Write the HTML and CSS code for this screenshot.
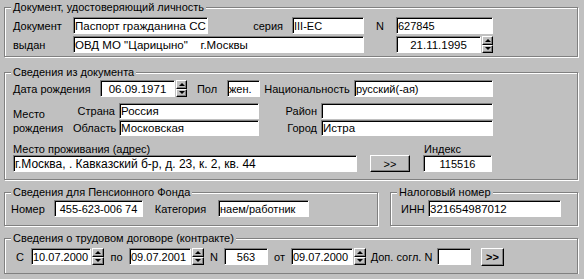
FILE: index.html
```html
<!DOCTYPE html>
<html lang="ru">
<head>
    <meta charset="UTF-8">
    <title>Карточка сотрудника</title>
    <link rel="stylesheet" href="styles.css">
</head>
<body>
    <div class="form">
        <!-- Документ -->
        <div class="group g-doc">
            <span class="group-title">Документ, удостоверяющий личность</span>
            <div class="row">
                <span class="lbl lbl-doc">Документ</span>
                <input class="edit doc-type" value="Паспорт гражданина СССР">
                <span class="lbl lbl-series">серия</span>
                <input class="edit doc-series" value="III-ЕС">
                <span class="lbl lbl-n">N</span>
                <input class="edit doc-number" value="627845">
            </div>
            <div class="row">
                <span class="lbl lbl-doc">выдан</span>
                <input class="edit doc-issuer" value="ОВД МО &quot;Царицыно&quot;    г.Москвы">
                <span class="lbl lbl-n"></span>
                <div class="date date-issued">
                    <input class="edit center" value="21.11.1995">
                    <span class="spin"><span class="spin-up"></span><span class="spin-down"></span></span>
                </div>
            </div>
        </div>

        <!-- Сведения из документа -->
        <div class="group g-birth">
            <span class="group-title">Сведения из документа</span>
            <div class="row">
                <span class="lbl lbl-bdate">Дата рождения</span>
                <div class="date date-birth">
                    <input class="edit center" value="06.09.1971">
                    <span class="spin"><span class="spin-up"></span><span class="spin-down"></span></span>
                </div>
                <span class="lbl lbl-sex">Пол</span>
                <input class="edit sex" value="жен.">
                <span class="lbl lbl-nat">Национальность</span>
                <input class="edit nat" value="русский(-ая)">
            </div>
            <div class="birthplace">
                <span class="bp-title">Место<br>рождения</span>
                <span class="lbl bp-lbl">Страна</span>
                <input class="edit short" value="Россия">
                <span class="lbl bp-lbl">Район</span>
                <input class="edit short" value="">
                <span class="lbl bp-lbl">Область</span>
                <input class="edit short" value="Московская">
                <span class="lbl bp-lbl">Город</span>
                <input class="edit short" value="Истра">
            </div>
            <div class="address">
                <span class="cap">Место проживания (адрес)</span>
                <span class="cap cap-index">Индекс</span>
                <input class="edit addr" value="г.Москва, . Кавказский б-р, д. 23, к. 2, кв. 44">
                <button class="btn">&gt;&gt;</button>
                <input class="edit center" value="115516">
            </div>
        </div>

        <div class="pair">
            <!-- Пенсионный фонд -->
            <div class="group g-pension">
                <span class="group-title">Сведения для Пенсионного Фонда</span>
                <div class="row">
                    <span class="lbl lbl-num">Номер</span>
                    <input class="edit pfr-num center" value="455-623-006 74">
                    <span class="lbl lbl-cat">Категория</span>
                    <input class="edit pfr-cat" value="наем/работник">
                </div>
            </div>
            <!-- ИНН -->
            <div class="group g-tax">
                <span class="group-title">Налоговый номер</span>
                <div class="row">
                    <span class="lbl lbl-inn">ИНН</span>
                    <input class="edit inn" value="321654987012">
                </div>
            </div>
        </div>

        <!-- Трудовой договор -->
        <div class="group g-contract">
            <span class="group-title">Сведения о трудовом договоре (контракте)</span>
            <div class="row">
                <span class="lbl lbl-from">С</span>
                <input class="edit c-date1" value="10.07.2000">
                <span class="spin spin-out"><span class="spin-up"></span><span class="spin-down"></span></span>
                <span class="lbl lbl-to">по</span>
                <input class="edit c-date2" value="09.07.2001">
                <span class="spin spin-out"><span class="spin-up"></span><span class="spin-down"></span></span>
                <span class="lbl lbl-cn">N</span>
                <input class="edit c-num center" value="563">
                <span class="lbl lbl-ot">от</span>
                <input class="edit c-date3" value="09.07.2000">
                <span class="spin spin-out"><span class="spin-up"></span><span class="spin-down"></span></span>
                <span class="lbl lbl-add">Доп. согл. N</span>
                <input class="edit c-add" value="">
                <button class="btn btn-bold">&gt;&gt;</button>
            </div>
        </div>
    </div>
</body>
</html>
```

FILE: styles.css
```css
body {
    margin: 0;
    background: #c0c0c0;
    font-family: "Liberation Sans", Arial, sans-serif;
    font-size: 11px;
    color: #000;
}
.form {
    display: flex;
    flex-direction: column;
    padding: 7px 6px 0 4px;
}

/* group boxes */
.group {
    position: relative;
    border: 1px solid #808080;
    box-shadow: inset 1px 1px #fff, 1px 1px #fff;
    padding: 0 8px;
}
.group-title {
    position: absolute;
    top: -8px;
    left: 6px;
    padding: 0 2px;
    line-height: 14px;
    background: #c0c0c0;
    white-space: nowrap;
}
.g-doc {
    padding-top: 9px;
    padding-bottom: 3px;
    display: flex;
    flex-direction: column;
    gap: 2px;
}
.g-birth {
    margin-top: 15px;
    padding-top: 7px;
    padding-bottom: 7px;
}
.pair {
    display: flex;
    gap: 12px;
    margin-top: 12px;
}
.g-pension {
    width: 374px;
    box-sizing: border-box;
    padding: 7px 6px 8px;
}
.g-tax {
    flex: 1;
    padding: 7px 10px 8px;
}
.g-contract {
    margin-top: 12px;
    padding-top: 9px;
    padding-bottom: 8px;
}

/* rows and labels */
.row {
    display: flex;
    align-items: center;
    height: 17px;
}
.lbl {
    flex: none;
    white-space: nowrap;
}
.lbl-doc { width: 60px; }
.lbl-series { width: 84px; text-align: right; padding-right: 9px; box-sizing: border-box; }
.lbl-n { width: 32px; text-align: center; }
.lbl-bdate { width: 87px; }
.lbl-sex { width: 40px; text-align: center; }
.lbl-nat { width: 94px; text-align: center; }
.lbl-num { width: 43px; }
.lbl-cat { width: 75px; text-align: center; }
.lbl-inn { width: 27px; }
.lbl-from { width: 18px; padding-left: 3px; box-sizing: border-box; }
.lbl-to { width: 25px; text-align: center; }
.lbl-cn { width: 20px; text-align: center; }
.lbl-ot { width: 23px; text-align: center; }
.lbl-add { width: 71px; text-align: center; }

/* sunken edit */
.edit {
    flex: none;
    box-sizing: border-box;
    height: 17px;
    margin: 0;
    padding: 0 1px;
    border: 1px solid;
    border-color: #808080 #fff #fff #808080;
    box-shadow: inset 1px 1px #000;
    background: #fff;
    font: inherit;
    color: #000;
    outline: none;
}
.center { text-align: center; }
.addr { font-size: 12px; }
.doc-type { width: 135px; font-size: 11.5px; }
.doc-series { width: 72px; }
.doc-number { width: 97px; }
.doc-issuer { width: 291px; font-size: 11.5px; }
.sex { width: 33px; }
.nat { width: 139px; }
.pfr-num { width: 89px; }
.pfr-cat { width: 91px; }
.inn { width: 133px; font-size: 11.5px; }
.c-date1 { width: 60px; }
.c-date2 { width: 62px; }
.c-num { width: 44px; }
.c-date3 { width: 62px; }
.c-add { width: 34px; margin-right: 10px; }

/* date with spinner */
.date {
    flex: none;
    display: flex;
}
.date .edit {
    flex: 1;
    width: 0;
    font-size: 11.5px;
}
.date-issued { width: 97px; }
.date-birth { width: 87px; }
.spin {
    flex: none;
    display: flex;
    flex-direction: column;
    width: 11px;
    height: 17px;
    margin-left: 1px;
}
.spin-out {
    width: 12px;
}
.spin-up,
.spin-down {
    flex: 1;
    display: flex;
    align-items: center;
    justify-content: center;
    background: #c0c0c0;
    border: 1px solid;
    border-color: #fff #000 #000 #fff;
    box-shadow: inset -1px -1px #808080;
}
.spin-up::after,
.spin-down::after {
    content: "";
    border-left: 3px solid transparent;
    border-right: 3px solid transparent;
}
.spin-up::after { border-bottom: 3px solid #000; }
.spin-down::after { border-top: 3px solid #000; }

/* birthplace block */
.birthplace {
    display: grid;
    grid-template-columns: 60px 46px 140px 62px 172px;
    grid-template-rows: 16px 16px;
    row-gap: 1px;
    margin-top: 6px;
}
.birthplace .edit {
    height: 16px;
    width: 100%;
    font-size: 11.5px;
}
.bp-title {
    grid-row: 1 / 3;
    grid-column: 1;
    align-self: center;
    line-height: 14px;
    padding-top: 3px;
}
.bp-lbl {
    text-align: right;
    padding-right: 4px;
    line-height: 16px;
}

/* address block */
.address {
    display: grid;
    grid-template-columns: 344px 40px 69px;
    grid-template-rows: 12px 17px;
    column-gap: 13px;
    margin-top: 7px;
}
.address .cap {
    line-height: 12px;
}
.address .cap-index {
    grid-column: 3;
    padding-left: 1px;
}
.address .edit {
    width: 100%;
}

/* raised button */
.btn {
    box-sizing: border-box;
    height: 17px;
    margin: 0;
    padding: 0;
    background: #c0c0c0;
    border: 1px solid;
    border-color: #fff #000 #000 #fff;
    box-shadow: inset -1px -1px #808080;
    font: inherit;
    color: #000;
}
.btn-bold {
    width: 23px;
    height: 18px;
    font-weight: bold;
}
```
